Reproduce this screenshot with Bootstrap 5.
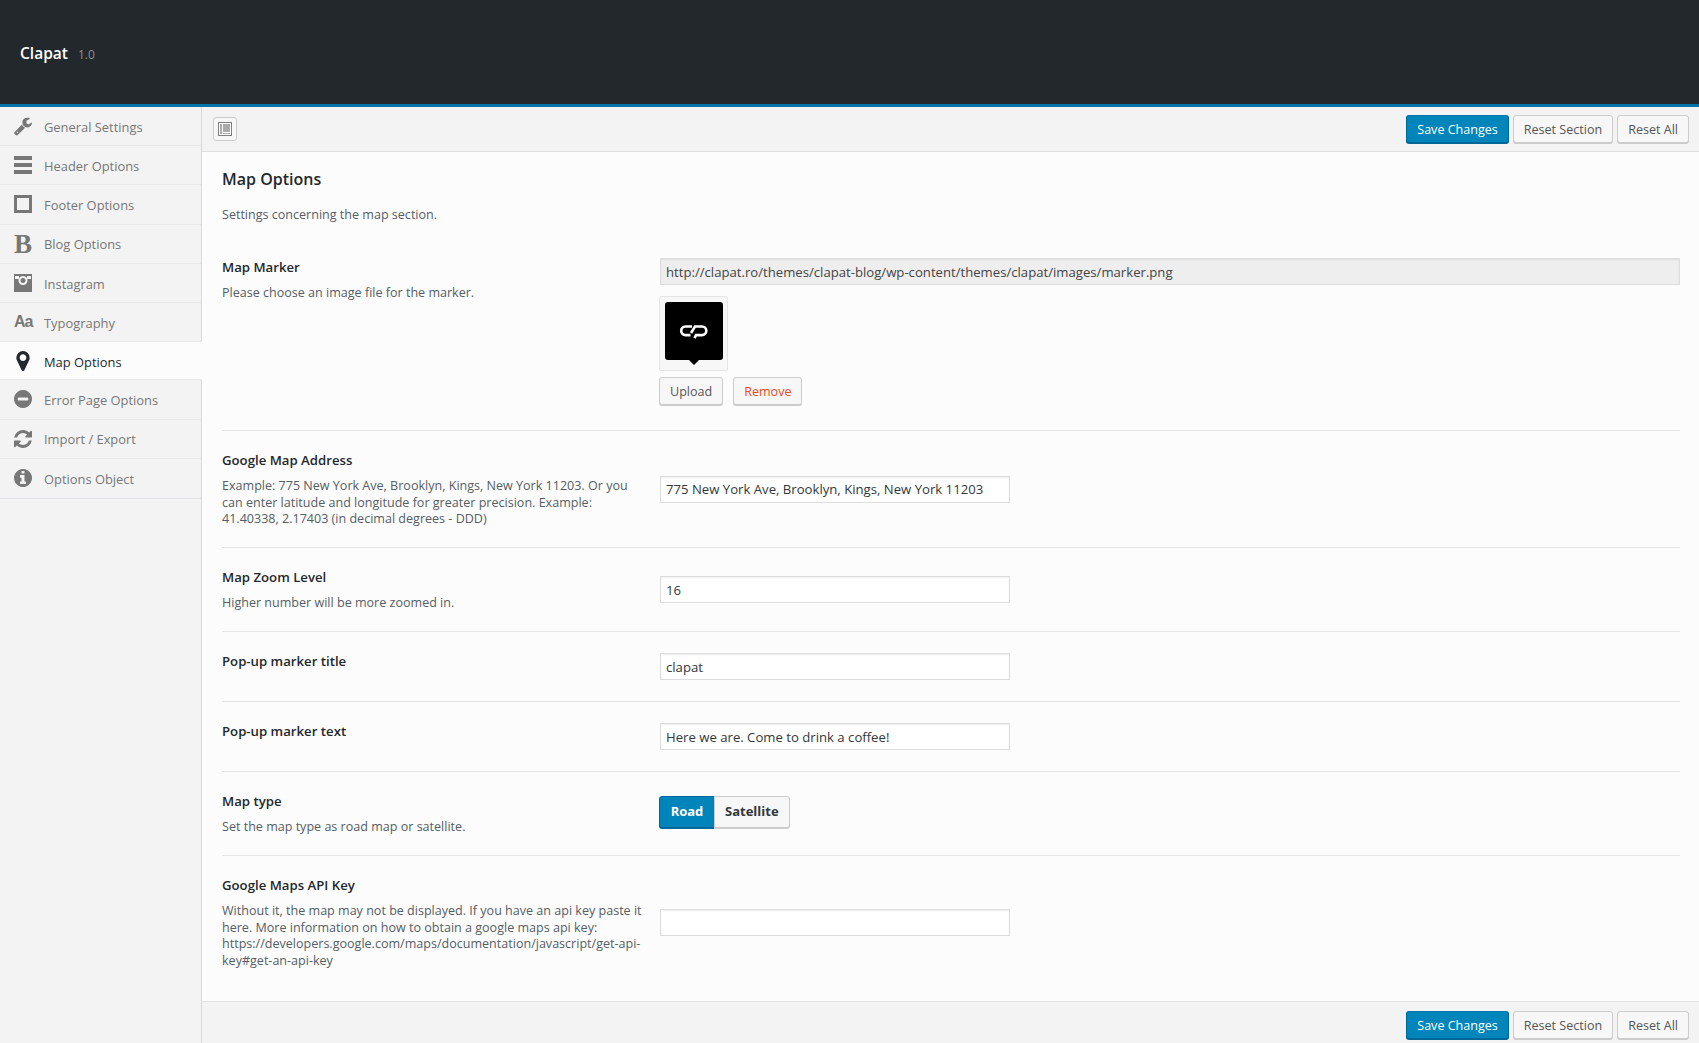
<!DOCTYPE html>
<html lang="en">
<head>
    <meta charset="UTF-8">
    <meta name="viewport" content="width=device-width, initial-scale=1.0">
    <title>Clapat Options</title>
    <link href="https://cdn.jsdelivr.net/npm/bootstrap@5.3.0/dist/css/bootstrap.min.css" rel="stylesheet">
    <style>
        body {
            font-family: "Open Sans", "Noto Sans", sans-serif;
            font-size: 12.55px;
            color: #555d66;
            background-color: #fcfcfc;
        }
        .top-head {
            height: 107px;
            padding: 4px 20px 0;
            background-color: #23282d;
            border-bottom: 3px solid #0073aa;
        }
        .top-head .head-name { color: #fff; font-size: 15.5px; font-weight: 600; }
        .top-head .head-ver { color: #8b8f93; font-size: 12px; margin-left: 10px; padding-top: 1px; }
        .side-col {
            width: 202px;
            flex-shrink: 0;
            background-color: #f3f3f3;
            border-right: 1px solid #d8d8d8;
        }
        .side-col .list-group-item {
            height: 39.2px;
            padding: 0 0 0 14px;
            gap: 12px;
            color: #777;
            background-color: transparent;
            border-color: #e7e7e7;
            font-size: 12.9px;
        }
        .side-col .list-group-item.active {
            color: #23282d;
            background-color: #fcfcfc;
            margin-right: -1px;
        }
        .side-text { padding-top: 3px; }
        .side-ico {
            width: 18px;
            height: 20px;
            flex-shrink: 0;
            fill: currentColor;
            display: block;
        }
        .side-letter {
            width: 18px;
            flex-shrink: 0;
            line-height: 20px;
            text-align: center;
            font-weight: 700;
        }
        .side-letter.b-ico { font-family: "Liberation Serif", serif; font-size: 27px; }
        .side-letter.a-ico { font-family: "Liberation Sans", sans-serif; font-size: 16px; letter-spacing: -1px; }
        .main-col { min-width: 0; }
        .tool-bar {
            background-color: #f3f3f3;
            padding: 8px 10px 7px 11px;
        }
        .tool-bar.tool-top { height: 45px; border-bottom: 1px solid #dedede; }
        .tool-bar.tool-bot { height: 42px; border-top: 1px solid #e4e4e4; padding-top: 9px; padding-bottom: 3px; }
        .expand-btn {
            width: 24px;
            height: 24px;
            margin-top: 2px;
            border: 1px solid #ccc;
            border-radius: 3px;
            background-color: #f7f7f7;
        }
        .wp-btn {
            font-size: 12.55px;
            line-height: 27px;
            height: 28px;
            padding: 0 10px;
            color: #555;
            background-color: #f7f7f7;
            border: 1px solid #ccc;
            border-radius: 3px;
            box-shadow: 0 1px 0 #ccc;
        }
        .wp-btn.wp-blue {
            color: #fff;
            background-color: #0085ba;
            border-color: #0073aa #006799 #006799;
            box-shadow: 0 1px 0 #006799;
        }
        .wp-btn.wp-red { color: #f1471d; margin-left: 10px; width: 69px; }
        .page-area { padding: 0 19px 12px 20px; }
        .sec-title { color: #23282d; font-size: 16px; font-weight: 600; margin: 0; padding-top: 16px; line-height: 22px; }
        .sec-desc { margin: 0; padding-top: 16px; line-height: 18px; height: 48px; }
        .opt-row { border-bottom: 1px solid #e5e5e5; }
        .opt-row:last-child { border-bottom: 0; }
        .opt-left { width: 437px; flex-shrink: 0; padding: 20px 15px 19.5px 0; }
        .opt-field { flex-grow: 1; padding: 21px 0; }
        .opt-field.marker-field { padding: 20px 0 25px; }
        .opt-name { color: #23282d; font-size: 13.2px; font-weight: 550; line-height: 18px; }
        .opt-help { line-height: 16.5px; margin-top: 9px; }
        .opt-input {
            height: 27px;
            margin-left: 1px;
            padding: 0 5px;
            font-size: 13.15px;
            color: #32373c;
            background-color: #fff;
            border: 1px solid #ddd;
            border-radius: 0;
            box-shadow: inset 0 1px 2px rgba(0,0,0,.07);
        }
        .opt-input.short-input { width: 350px; }
        .opt-input:disabled { background-color: #eee; color: #444; width: calc(100% - 1px); }
        .thumb-box {
            width: 69px;
            height: 75px;
            margin-top: 11px;
            margin-bottom: 6px;
            padding: 5px;
            background-color: #f7f7f7;
            border: 1px solid #e5e5e5;
            border-radius: 2px;
        }
        .seg-wrap { margin-bottom: 4px; }
        .seg-btn {
            font-size: 13px;
            font-weight: 700;
            height: 32px;
            padding: 0 10px;
            color: #32373c;
            background-color: #f7f7f7;
            border: 1px solid #ccc;
            border-radius: 3px;
            box-shadow: 0 1px 0 #ccc;
        }
        .seg-btn.seg-on {
            color: #fff;
            width: 56px;
            background-color: #0085ba;
            border-color: #006799;
            box-shadow: 0 1px 0 #006799;
        }
    </style>
</head>
<body>
    <div class="d-flex flex-column min-vh-100">
        <header class="top-head d-flex align-items-center">
            <span class="head-name">Clapat</span>
            <span class="head-ver">1.0</span>
        </header>
        <div class="d-flex flex-grow-1">
            <aside class="side-col">
                <div class="list-group list-group-flush border-bottom">
                    <a href="#" class="list-group-item d-flex align-items-center">
                        <svg class="side-ico" viewBox="64 64 1664 1664"><path d="M448 1472q0-26-19-45t-45-19-45 19-19 45 19 45 45 19 45-19 19-45zm644-420l-682 682q-37 37-90 37-52 0-91-37l-106-108q-38-36-38-90 0-53 38-91l681-681q39 98 114.5 173.5t173.5 114.5zm634-435q0 39-23 106-47 134-164.5 217.5t-258.5 83.5q-185 0-316.5-131.5t-131.5-316.5 131.5-316.5 316.5-131.5q58 0 121.5 16.5t107.5 46.5q16 11 16 28t-16 28l-293 169v224l193 107q5-3 79-48.5t135.5-81 70.5-35.5q15 0 23.5 10t8.5 25z"/></svg>
                        <span class="side-text">General Settings</span>
                    </a>
                    <a href="#" class="list-group-item d-flex align-items-center">
                        <svg class="side-ico" viewBox="0 0 18 20"><rect y="1" width="18" height="4"/><rect y="8" width="18" height="4"/><rect y="15" width="18" height="4"/></svg>
                        <span class="side-text">Header Options</span>
                    </a>
                    <a href="#" class="list-group-item d-flex align-items-center">
                        <svg class="side-ico" viewBox="0 0 18 20"><path fill-rule="evenodd" d="M0 1h18v18H0zM3 4v12h12V4z"/></svg>
                        <span class="side-text">Footer Options</span>
                    </a>
                    <a href="#" class="list-group-item d-flex align-items-center">
                        <span class="side-letter b-ico">B</span>
                        <span class="side-text">Blog Options</span>
                    </a>
                    <a href="#" class="list-group-item d-flex align-items-center">
                        <svg class="side-ico" viewBox="0 0 18 20"><path fill-rule="evenodd" d="M0 1h18v18H0zM1 3v3h4V3zM13 3v3h4V3zM9 3a4.500 4.500 0 1 0 .01 0zM9 5a2.500 2.500 0 1 1-.01 0z"/></svg>
                        <span class="side-text">Instagram</span>
                    </a>
                    <a href="#" class="list-group-item d-flex align-items-center">
                        <span class="side-letter a-ico">Aa</span>
                        <span class="side-text">Typography</span>
                    </a>
                    <a href="#" class="list-group-item active d-flex align-items-center">
                        <svg class="side-ico" viewBox="384 128 1024 1536"><path d="M1152 640q0-106-75-181t-181-75-181 75-75 181 75 181 181 75 181-75 75-181zm256 0q0 109-33 179l-364 774q-16 33-47.5 52t-67.5 19-67.5-19-46.5-52l-365-774q-33-70-33-179 0-212 150-362t362-150 362 150 150 362z"/></svg>
                        <span class="side-text">Map Options</span>
                    </a>
                    <a href="#" class="list-group-item d-flex align-items-center">
                        <svg class="side-ico" viewBox="128 128 1536 1536"><path d="M1344 960v-128q0-26-19-45t-45-19h-768q-26 0-45 19t-19 45v128q0 26 19 45t45 19h768q26 0 45-19t19-45zm320-64q0 209-103 385.5t-279.5 279.5-385.5 103-385.5-103-279.5-279.5-103-385.5 103-385.5 279.500-279.5 385.5-103 385.5 103 279.5 279.5 103 385.5z"/></svg>
                        <span class="side-text">Error Page Options</span>
                    </a>
                    <a href="#" class="list-group-item d-flex align-items-center">
                        <svg class="side-ico" viewBox="128 128 1536 1536"><path d="M1639 1056q0 5-1 7-64 268-268 434.5t-478 166.5q-146 0-282.5-55t-243.5-157l-129 129q-19 19-45 19t-45-19-19-45v-448q0-26 19-45t45-19h448q26 0 45 19t19 45-19 45l-137 137q71 66 161 102t187 36q134 0 250-65t186-179q11-17 53-117 8-23 30-23h192q13 0 22.5 9.5t9.5 22.5zm25-800v448q0 26-19 45t-45 19h-448q-26 0-45-19t-19-45 19-45l138-138q-148-137-349-137-134 0-250 65t-186 179q-11 17-53 117-8 23-30 23h-199q-13 0-22.5-9.5t-9.5-22.5v-7q65-268 270-434.5t480-166.5q146 0 284 55.5t245 156.5l130-129q19-19 45-19t45 19 19 45z"/></svg>
                        <span class="side-text">Import / Export</span>
                    </a>
                    <a href="#" class="list-group-item d-flex align-items-center">
                        <svg class="side-ico" viewBox="128 128 1536 1536"><path d="M1152 1376v-160q0-14-9-23t-23-9h-96v-512q0-14-9-23t-23-9h-320q-14 0-23 9t-9 23v160q0 14 9 23t23 9h96v320h-96q-14 0-23 9t-9 23v160q0 14 9 23t23 9h448q14 0 23-9t9-23zm-128-896v-160q0-14-9-23t-23-9h-192q-14 0-23 9t-9 23v160q0 14 9 23t23 9h192q14 0 23-9t9-23zm640 416q0 209-103 385.5t-279.5 279.5-385.5 103-385.5-103-279.5-279.5-103-385.5 103-385.5 279.5-279.5 385.5-103 385.5 103 279.5 279.5 103 385.5z"/></svg>
                        <span class="side-text">Options Object</span>
                    </a>
                </div>
            </aside>
            <main class="main-col flex-grow-1 d-flex flex-column">
                <div class="tool-bar tool-top d-flex align-items-start">
                    <button type="button" class="expand-btn p-0 d-flex align-items-center justify-content-center" aria-label="Expand">
                        <svg width="14" height="14" viewBox="0 0 14 14"><rect x=".5" y=".5" width="13" height="13" fill="#fff" stroke="#808080"/><rect x="2" y="2" width="2" height="10" fill="#aaa"/><rect x="5" y="2" width="7" height="8" fill="#aaa"/><rect x="5" y="11" width="7" height="1" fill="#aaa"/></svg>
                    </button>
                    <div class="ms-auto d-flex gap-1">
                        <button type="button" class="btn wp-btn wp-blue">Save Changes</button>
                        <button type="button" class="btn wp-btn">Reset Section</button>
                        <button type="button" class="btn wp-btn">Reset All</button>
                    </div>
                </div>
                <div class="page-area flex-grow-1">
                    <h2 class="sec-title">Map Options</h2>
                    <p class="sec-desc">Settings concerning the map section.</p>

                    <div class="opt-row d-flex">
                        <div class="opt-left">
                            <div class="opt-name">Map Marker</div>
                            <div class="opt-help">Please choose an image file for the marker.</div>
                        </div>
                        <div class="opt-field marker-field">
                            <input type="text" class="form-control opt-input" disabled value="http://clapat.ro/themes/clapat-blog/wp-content/themes/clapat/images/marker.png">
                            <div class="thumb-box">
                                <svg width="58" height="63" viewBox="0 0 58 63" class="d-block">
                                    <path d="M3 0h52a3 3 0 0 1 3 3v52a3 3 0 0 1-3 3H34l-5 5-5-5H3a3 3 0 0 1-3-3V3a3 3 0 0 1 3-3z"/>
                                    <path d="M27 24.500h-6.500a4.300 4.300 0 0 0 0 8.600h5M26 31l4-6.500h7a4.300 4.300 0 0 1 0 8.600h-6l-1.500 3" fill="none" stroke="#fff" stroke-width="2.600"/>
                                </svg>
                            </div>
                            <div class="d-flex">
                                <button type="button" class="btn wp-btn">Upload</button>
                                <button type="button" class="btn wp-btn wp-red">Remove</button>
                            </div>
                        </div>
                    </div>

                    <div class="opt-row d-flex">
                        <div class="opt-left">
                            <div class="opt-name">Google Map Address</div>
                            <div class="opt-help">Example: 775 New York Ave, Brooklyn, Kings, New York 11203. Or you can enter latitude and longitude for greater precision. Example: 41.40338, 2.17403 (in decimal degrees - DDD)</div>
                        </div>
                        <div class="opt-field d-flex align-items-center">
                            <input type="text" class="form-control opt-input short-input" value="775 New York Ave, Brooklyn, Kings, New York 11203">
                        </div>
                    </div>

                    <div class="opt-row d-flex">
                        <div class="opt-left">
                            <div class="opt-name">Map Zoom Level</div>
                            <div class="opt-help">Higher number will be more zoomed in.</div>
                        </div>
                        <div class="opt-field d-flex align-items-center">
                            <input type="text" class="form-control opt-input short-input" value="16">
                        </div>
                    </div>

                    <div class="opt-row d-flex">
                        <div class="opt-left">
                            <div class="opt-name">Pop-up marker title</div>
                        </div>
                        <div class="opt-field d-flex align-items-center">
                            <input type="text" class="form-control opt-input short-input" value="clapat">
                        </div>
                    </div>

                    <div class="opt-row d-flex">
                        <div class="opt-left">
                            <div class="opt-name">Pop-up marker text</div>
                        </div>
                        <div class="opt-field d-flex align-items-center">
                            <input type="text" class="form-control opt-input short-input" value="Here we are. Come to drink a coffee!">
                        </div>
                    </div>

                    <div class="opt-row d-flex">
                        <div class="opt-left">
                            <div class="opt-name">Map type</div>
                            <div class="opt-help">Set the map type as road map or satellite.</div>
                        </div>
                        <div class="opt-field d-flex align-items-center">
                            <div class="btn-group seg-wrap" role="group">
                                <button type="button" class="btn seg-btn seg-on">Road</button>
                                <button type="button" class="btn seg-btn">Satellite</button>
                            </div>
                        </div>
                    </div>

                    <div class="opt-row d-flex">
                        <div class="opt-left">
                            <div class="opt-name">Google Maps API Key</div>
                            <div class="opt-help">Without it, the map may not be displayed. If you have an api key paste it here. More information on how to obtain a google maps api key: https://developers.google.com/maps/documentation/javascript/get-api-key#get-an-api-key</div>
                        </div>
                        <div class="opt-field d-flex align-items-center">
                            <input type="text" class="form-control opt-input short-input" value="">
                        </div>
                    </div>
                </div>
                <div class="tool-bar tool-bot d-flex">
                    <div class="ms-auto d-flex gap-1">
                        <button type="button" class="btn wp-btn wp-blue">Save Changes</button>
                        <button type="button" class="btn wp-btn">Reset Section</button>
                        <button type="button" class="btn wp-btn">Reset All</button>
                    </div>
                </div>
            </main>
        </div>
    </div>

    <script src="https://cdn.jsdelivr.net/npm/bootstrap@5.3.0/dist/js/bootstrap.bundle.min.js"></script>
</body>
</html>
